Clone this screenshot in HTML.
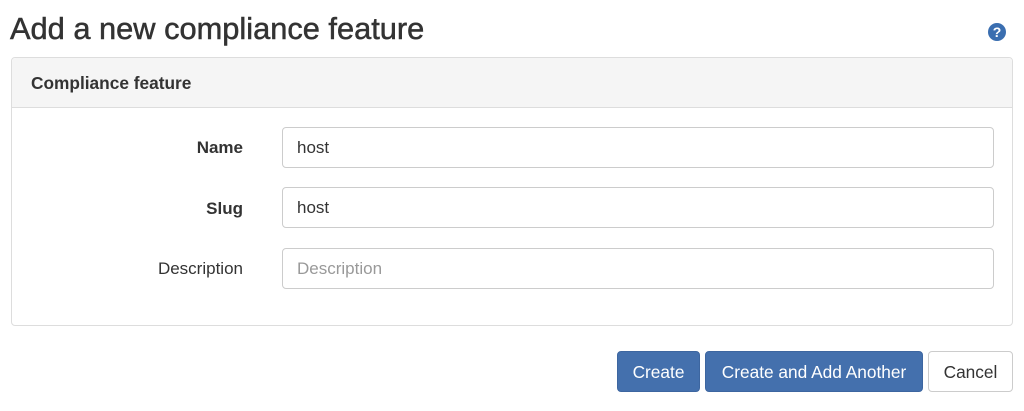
<!DOCTYPE html>
<html><head><style>
*{box-sizing:border-box;margin:0;padding:0}
body{width:1024px;height:411px;background:#fff;font-family:"Liberation Sans",sans-serif;color:#333;position:relative;overflow:hidden}
h1{position:absolute;left:10px;top:11px;font-size:30.8px;font-weight:normal;color:#333;-webkit-text-stroke:0.5px #333}
.help{position:absolute;left:988px;top:23px;width:18px;height:18px;border-radius:50%;background:#3a6eb0;color:#fff;font-size:14px;font-weight:bold;text-align:center;line-height:18px}
.panel{position:absolute;left:11px;top:57px;width:1002px;height:269px;border:1px solid #ddd;border-radius:4px}
.ph{height:50px;background:#f5f5f5;border-bottom:1px solid #ddd;font-weight:bold;font-size:17.3px;padding:15px 0 0 19px;border-radius:4px 4px 0 0}
.lbl{position:absolute;right:769px;font-size:17px;text-align:right}
.inp{position:absolute;left:270px;width:712px;height:41px;border:1px solid #ccc;border-radius:4px;font-size:17px;padding:10px 0 0 14px}
.btn{position:absolute;top:351px;height:41px;border-radius:4px;font-size:17.3px;text-align:center;line-height:41px}
.p{background:#4470ad;color:#fff;border:1px solid #3d66a0}
</style></head><body>
<h1>Add a new compliance feature</h1>
<div class="help">?</div>
<div class="panel">
<div class="ph">Compliance feature</div>
<div class="lbl" style="top:80px;font-weight:bold">Name</div>
<div class="inp" style="top:69px">host</div>
<div class="lbl" style="top:141px;font-weight:bold">Slug</div>
<div class="inp" style="top:129px">host</div>
<div class="lbl" style="top:201px">Description</div>
<div class="inp" style="top:190px;color:#999">Description</div>
</div>
<div class="btn p" style="left:617px;width:83px">Create</div>
<div class="btn p" style="left:705px;width:218px">Create and Add Another</div>
<div class="btn" style="left:928px;width:85px;border:1px solid #ccc;color:#333">Cancel</div>
</body></html>
